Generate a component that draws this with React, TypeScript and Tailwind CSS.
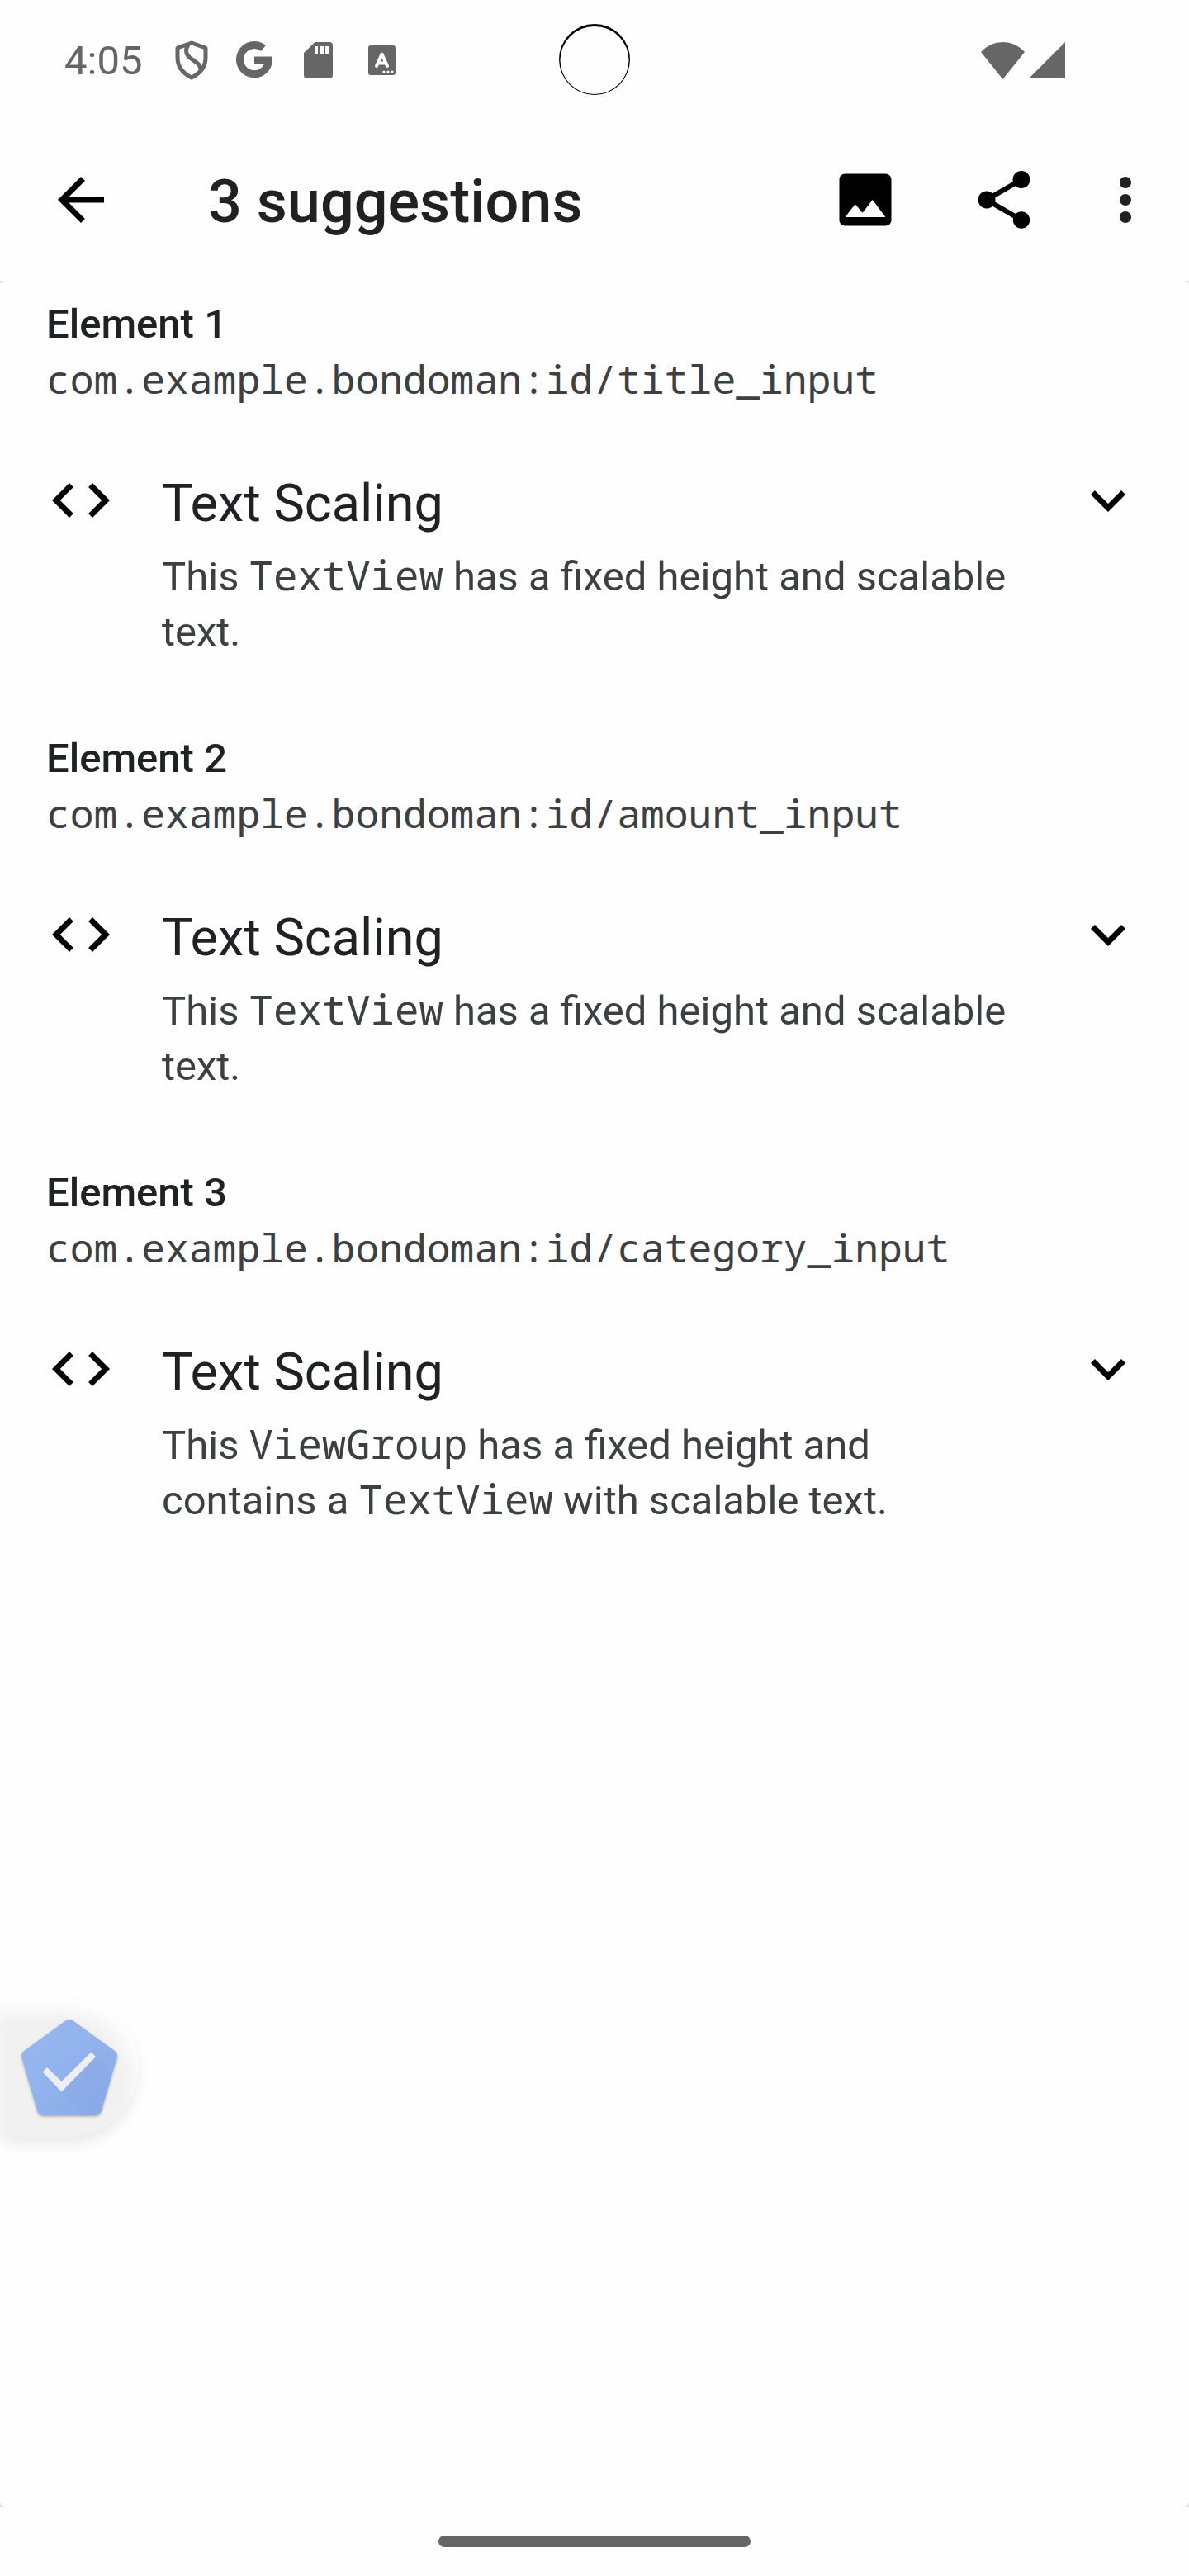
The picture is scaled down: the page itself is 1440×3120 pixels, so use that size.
const mono = "font-['Droid_Sans_Mono','Noto_Sans_Mono','DejaVu_Sans_Mono',monospace]";

function Icon({ d, className = 'text-black' }: { d: string; className?: string }) {
  return (
    <svg viewBox="0 0 24 24" className={`size-[84px] shrink-0 ${className}`} fill="currentColor" aria-hidden="true">
      <path d={d} />
    </svg>
  );
}

const paths = {
  back: 'M20 11H7.83l5.59-5.59L12 4l-8 8 8 8 1.41-1.41L7.83 13H20v-2z',
  image: 'M21 19V5c0-1.1-.9-2-2-2H5c-1.1 0-2 .9-2 2v14c0 1.1.9 2 2 2h14c1.1 0 2-.9 2-2zM8.5 13.5l2.5 3.01L14.5 12l4.5 6H5l3.5-4.5z',
  share:
    'M18 16.08c-.76 0-1.44.3-1.96.77L8.91 12.7c.05-.23.09-.46.09-.7s-.04-.47-.09-.7l7.05-4.11c.54.5 1.25.81 2.04.81 1.66 0 3-1.34 3-3s-1.34-3-3-3-3 1.34-3 3c0 .24.04.47.09.7L8.04 9.81C7.5 9.31 6.79 9 6 9c-1.66 0-3 1.34-3 3s1.34 3 3 3c.79 0 1.5-.31 2.04-.81l7.12 4.16c-.05.21-.08.43-.08.65 0 1.61 1.31 2.92 2.92 2.92s2.92-1.31 2.92-2.92-1.31-2.92-2.92-2.92z',
  more: 'M12 8c1.1 0 2-.9 2-2s-.9-2-2-2-2 .9-2 2 .9 2 2 2zm0 2c-1.1 0-2 .9-2 2s.9 2 2 2 2-.9 2-2-.9-2-2-2zm0 6c-1.1 0-2 .9-2 2s.9 2 2 2 2-.9 2-2-.9-2-2-2z',
  code: 'M9.4 16.6L4.8 12l4.6-4.6L8 6l-6 6 6 6 1.4-1.4zm5.2 0l4.6-4.6-4.6-4.6L16 6l6 6-6 6-1.4-1.4z',
  expand: 'M16.59 8.59L12 13.17 7.41 8.59 6 10l6 6 6-6z',
};

function Code({ children }: { children: string }) {
  return <code className={`text-[49px] leading-none ${mono}`}>{children}</code>;
}

const suggestions = [
  { id: 'title_input', text: <>This <Code>TextView</Code> has a fixed height and scalable text.</> },
  { id: 'amount_input', text: <>This <Code>TextView</Code> has a fixed height and scalable text.</> },
  {
    id: 'category_input',
    text: <>This <Code>ViewGroup</Code> has a fixed height and contains a <Code>TextView</Code> with scalable text.</>,
  },
];

function StatusBar() {
  return (
    <div className="relative flex h-36 items-center justify-between pt-0.5 pr-[150px] pl-[78px] text-[#666]">
      <div className="flex items-center">
        <span className="pt-0.5 text-[49px] leading-[58px]">4:05</span>
        <div className="ml-10 flex items-center">
          <svg viewBox="0 0 40 48" className="h-12 w-10" fill="none" stroke="currentColor" strokeWidth="5" strokeLinejoin="round" aria-label="Security">
            <path d="M20 3 37 9V21C37 32 30 40 20 45 10 40 3 32 3 21V9Z" />
            <path d="M16 5C12 11 13 17 18 21 25 26 32 29 31 37" />
          </svg>
          <svg viewBox="0 0 44 46" className="ml-[34px] h-[46px] w-11" fill="none" stroke="currentColor" strokeWidth="9" aria-label="Google">
            <path d="M33 8.500A17.500 17.500 0 1 0 39.500 23H22" />
          </svg>
          <svg viewBox="0 0 35 44" className="ml-[38px] h-11 w-[35px]" fill="currentColor" fillRule="evenodd" aria-label="Storage">
            <path d="M13.500 0H31Q35 0 35 4V40Q35 44 31 44H4Q0 44 0 40V13ZM13 5V14H17V5ZM20 5V14H24V5ZM26 5V14H31V5Z" />
          </svg>
          <svg viewBox="0 0 33 36" className="ml-[43px] h-9 w-[33px]" aria-label="Keyboard">
            <rect width="33" height="36" rx="3" fill="currentColor" />
            <path d="M10 25 16.500 10.500 23 25M12 21.500H21" fill="none" stroke="#fff" strokeWidth="4" strokeLinecap="round" strokeLinejoin="round" />
            <circle cx="19" cy="32" r="1.600" fill="#fff" />
            <circle cx="24" cy="32" r="1.600" fill="#fff" />
            <circle cx="29" cy="32" r="1.600" fill="#fff" />
          </svg>
        </div>
      </div>
      {/* front camera outline */}
      <svg viewBox="0 0 86 86" className="absolute top-[29px] left-1/2 size-[86px] -translate-x-1/2" aria-hidden="true">
        <path fillRule="evenodd" d="M43 0A43 43 0 1 1 43 86A43 43 0 1 1 43 0ZM43 3A41.500 41 0 1 0 43 85A41.500 41 0 1 0 43 3Z" fill="#000" />
      </svg>
      <div className="flex items-center gap-[5px]">
        <svg viewBox="0 0 53 45" className="h-[45px] w-[53px]" fill="currentColor" aria-label="Wi-Fi">
          <path d="M26.500 45 0 12Q11 0 26.500 0T53 12Z" />
        </svg>
        <svg viewBox="0 0 44 44" className="size-11" fill="currentColor" aria-label="Signal">
          <path d="M44 0V44H0Z" />
        </svg>
      </div>
    </div>
  );
}

export default function App() {
  return (
    <div className="relative flex min-h-screen flex-col bg-[#fefefe] font-[Roboto,sans-serif]">
      <StatusBar />
      <header className="flex h-[196px] items-center pr-3.5 pl-14">
        <button aria-label="Back"><Icon d={paths.back} /></button>
        <h1 className="ml-28 flex-1 pt-1.5 text-[72px] leading-[84px] font-medium text-[#212121]">3 suggestions</h1>
        <button aria-label="Screenshot" className="flex w-[168px] justify-center"><Icon d={paths.image} /></button>
        <button aria-label="Share" className="flex w-[168px] justify-center"><Icon d={paths.share} /></button>
        <button aria-label="More options" className="flex w-[126px] justify-center"><Icon d={paths.more} className="text-[#212121]" /></button>
      </header>
      <div className="flex flex-1 flex-col bg-[#e4e4e4]">
        <main className="flex flex-1 flex-col gap-[87px] rounded-md bg-[#fefefe] px-14 pt-5 text-[49px] text-[#3c4043]">
          {suggestions.map((s, i) => (
            <section key={s.id}>
              <h2 className="leading-[66px] font-medium text-[#202124]">Element {i + 1}</h2>
              <p className={`text-[48px] leading-[66px] ${mono}`}>com.example.bondoman:id/{s.id}</p>
              <div className="mt-[72px] flex items-start">
                <Icon d={paths.code} />
                <div className="mr-[70px] ml-14 flex-1 pt-1">
                  <h3 className="text-[63px] leading-[84px] text-[#202124]">Text Scaling</h3>
                  <p className="mt-[13px] leading-[67px]">{s.text}</p>
                </div>
                <button aria-label={`Expand suggestion ${i + 1}`}><Icon d={paths.expand} /></button>
              </div>
            </section>
          ))}
        </main>
      </div>
      <footer className="flex h-21 items-center justify-center">
        <div className="h-3.5 w-[378px] rounded-full bg-[#666]" />
      </footer>
      <button
        aria-label="Accessibility Scanner"
        className="absolute bottom-[532px] left-0 h-[168px] w-[168px] rounded-r-full bg-[#f1f1f1] shadow-[0_10px_20px_-4px_rgba(0,0,0,0.10),inset_-6px_18px_20px_-2px_#fefefe]"
      >
        <svg viewBox="0 20 168 168" className="size-[168px]" aria-hidden="true">
          <defs>
            <linearGradient id="pentagon" x1="0" y1="0" x2="1" y2="1">
              <stop offset="0" stopColor="#98b8ee" />
              <stop offset="1" stopColor="#8aabea" />
            </linearGradient>
            <filter id="drop" x="-10%" y="-10%" width="120%" height="120%">
              <feDropShadow dx="0" dy="1.500" stdDeviation="1.500" floodOpacity="0.3" />
            </filter>
            <clipPath id="shape">
              <path d="M80 47Q84 45 88 47L139 84Q143 87 141.500 93L123 156Q121 162 115 162H53Q47 162 45 156L26.500 93Q25 87 29 84Z" />
            </clipPath>
          </defs>
          <path filter="url(#drop)" fill="url(#pentagon)" d="M80 47Q84 45 88 47L139 84Q143 87 141.500 93L123 156Q121 162 115 162H53Q47 162 45 156L26.500 93Q25 87 29 84Z" />
          <path clipPath="url(#shape)" fill="#87a4e2" fillOpacity="0.3" d="M74.500 133.500 116 91 168 140V190H130Z" />
          <path fill="#eee" d="M51.500 109.500 57 104 74.500 121 110.500 85.500 116 91 74.500 133.500Z" />
        </svg>
      </button>
    </div>
  );
}
